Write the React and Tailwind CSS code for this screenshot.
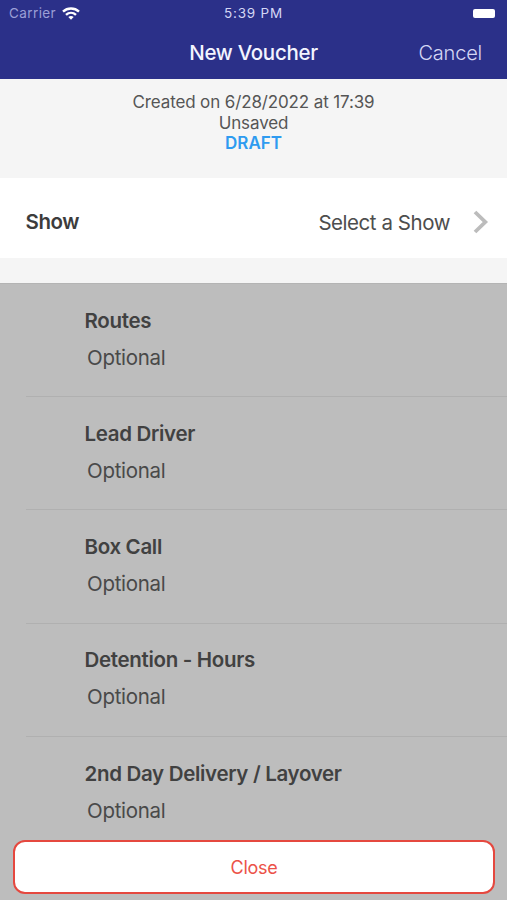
const rows = ['Routes', 'Lead Driver', 'Box Call', 'Detention - Hours', '2nd Day Delivery / Layover'];

function WifiIcon() {
  return (
    <svg width="18" height="14" viewBox="0 0 18 14" fill="none" stroke="#fff" strokeWidth="2.4">
      <path d="M1 4.6 C5.5 0.4 12.5 0.4 17 4.6" />
      <path d="M4 7.9 C6.9 5.2 11.1 5.2 14 7.9" />
      <path d="M6.3 10.1 Q9 7.8 11.7 10.1 L9 12.8 Z" fill="#fff" stroke="none" />
    </svg>
  );
}

function Row({ label, first }) {
  return (
    <div className={`shrink-0 pl-[26px] ${first ? 'h-[112px]' : 'h-[113.25px]'}`}>
      <div className={`h-full pl-[58.5px] ${first ? 'pt-[24px]' : 'border-t border-[#b0b0b0] pt-[23.75px]'}`}>
        <div className="h-[26px] text-[20.5px] font-semibold leading-[26px] tracking-[-0.32px] text-[#414141]">{label}</div>
        <div className="mt-[11px] h-[26px] pl-[2.5px] text-[20.5px] leading-[26px] tracking-[-0.3px] text-[#494949]">Optional</div>
      </div>
    </div>
  );
}

export default function App() {
  return (
    <div className="relative flex h-[900px] w-[507px] flex-col overflow-hidden bg-[#f5f5f5] font-['Inter',sans-serif]">
      <header className="h-[79px] shrink-0 bg-[#2b3089] text-white">
        <div className="grid h-[28px] grid-cols-3 items-center pb-[1px]">
          <div className="flex items-center gap-[6px] pl-[9px]">
            <span className="text-[13.5px] tracking-[0.4px] text-[#9b9fd6]">Carrier</span>
            <WifiIcon />
          </div>
          <span className="text-center text-[13.5px] tracking-[0.8px] text-[#d5d7f5]">5:39 PM</span>
          <div className="mr-[12px] h-[9px] w-[22px] justify-self-end rounded-[2px] bg-white" />
        </div>
        <div className="grid h-[49px] grid-cols-[1fr_auto_1fr] items-center">
          <span />
          <h1 className="pt-[2px] text-[20.5px] font-medium tracking-[-0.3px] text-[#f3f4ff]">New Voucher</h1>
          <span className="justify-self-end pr-[25px] text-[20px] font-light tracking-[-0.2px] text-[#d5d7f5]">Cancel</span>
        </div>
      </header>
      <section className="h-[99px] shrink-0 pt-[13px] text-center text-[17px] leading-[20.75px] tracking-[-0.13px] text-[#555]">
        <p>Created on 6/28/2022 at 17:39</p>
        <p>Unsaved</p>
        <p className="font-semibold leading-[19px] tracking-normal text-[#2e9bf0]">DRAFT</p>
      </section>
      <section className="flex h-[80px] shrink-0 items-center bg-white pb-[1px] pl-[25.5px] pr-[18px] pt-[8px] text-[20.5px] tracking-[-0.45px]">
        <span className="flex-1 pt-[2px] font-semibold tracking-[-0.4px] text-[#3c3c3c]">Show</span>
        <span className="mr-[23px] pt-[4px] text-[#4d4d4d]">Select a Show</span>
        <svg width="16" height="24" viewBox="0 0 16 24" fill="none" stroke="#bcbcbc" strokeWidth="3.8">
          <path d="M2 2 L12.3 12 L2 22" />
        </svg>
      </section>
      <main className="mt-[25px] flex flex-1 flex-col overflow-hidden border-t border-[#b4b4b4] bg-[#bdbdbd]">
        {rows.map((label, i) => (
          <Row key={label} label={label} first={i === 0} />
        ))}
      </main>
      <button className="absolute bottom-[6px] left-[13px] h-[54px] w-[482px] rounded-[12px] border-[2.5px] border-[#e5483f] bg-white text-[18px] tracking-[-0.3px] text-[#ec5248]">
        Close
      </button>
    </div>
  );
}
